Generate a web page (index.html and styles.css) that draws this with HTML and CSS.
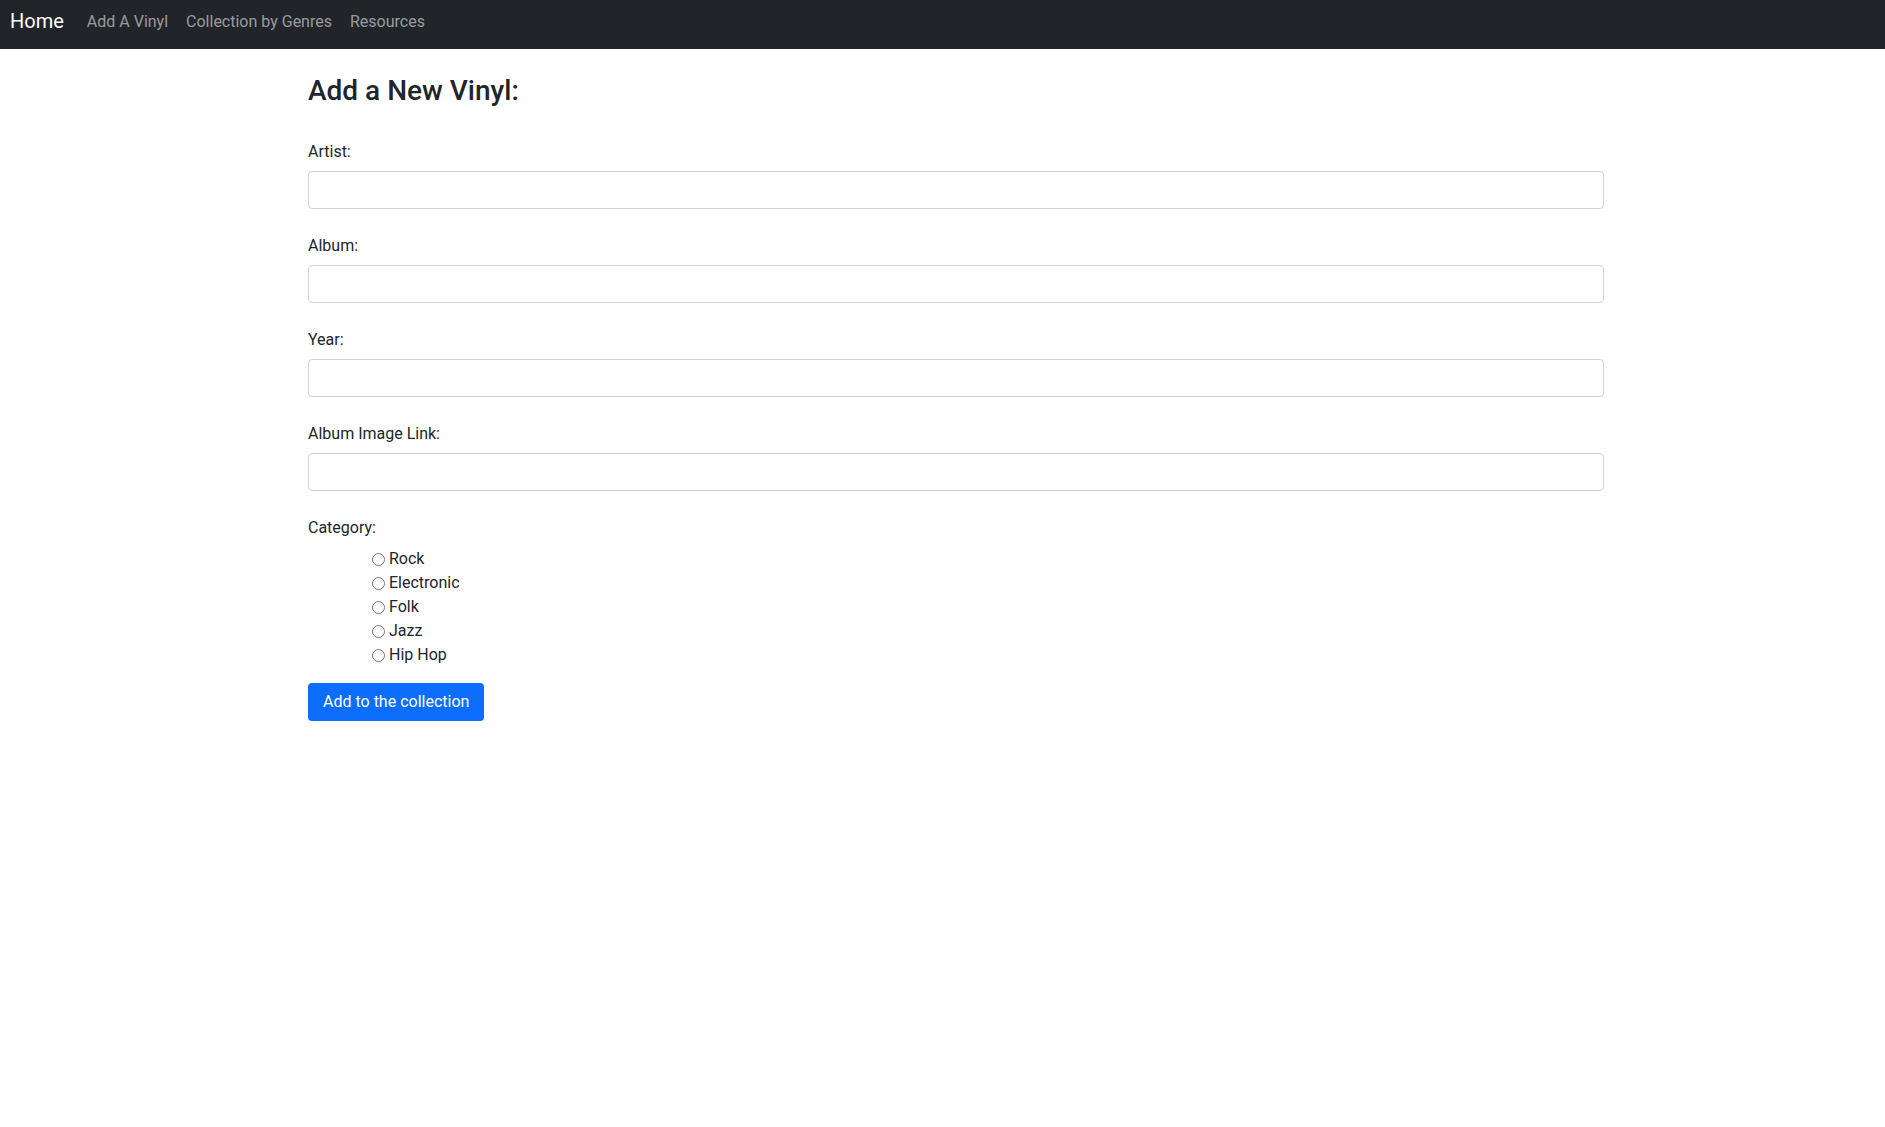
FILE: index.html
```html
<!DOCTYPE html>
<html lang="en">
<head>
<meta charset="utf-8">
<meta name="viewport" content="width=device-width, initial-scale=1">
<title>Add a Vinyl</title>
<link rel="stylesheet" href="styles.css">
</head>
<body>
<nav class="navbar">
  <a class="navbar-brand" href="#">Home</a>
  <ul class="navbar-nav">
    <li><a class="nav-link" href="#">Add A Vinyl</a></li>
    <li><a class="nav-link" href="#">Collection by Genres</a></li>
    <li><a class="nav-link" href="#">Resources</a></li>
  </ul>
</nav>
<main class="container">
  <h3 class="title">Add a New Vinyl:</h3>
  <form>
    <div class="field">
      <label class="form-label" for="artist">Artist:</label>
      <input class="form-control" type="text" id="artist" name="artist">
    </div>
    <div class="field">
      <label class="form-label" for="album">Album:</label>
      <input class="form-control" type="text" id="album" name="album">
    </div>
    <div class="field">
      <label class="form-label" for="year">Year:</label>
      <input class="form-control" type="text" id="year" name="year">
    </div>
    <div class="field">
      <label class="form-label" for="image">Album Image Link:</label>
      <input class="form-control" type="text" id="image" name="image">
    </div>
    <fieldset class="category">
      <legend class="form-label">Category:</legend>
      <div class="options">
        <label class="option"><input class="radio" type="radio" name="category" value="rock">Rock</label>
        <label class="option"><input class="radio" type="radio" name="category" value="electronic">Electronic</label>
        <label class="option"><input class="radio" type="radio" name="category" value="folk">Folk</label>
        <label class="option"><input class="radio" type="radio" name="category" value="jazz">Jazz</label>
        <label class="option"><input class="radio" type="radio" name="category" value="hiphop">Hip Hop</label>
      </div>
    </fieldset>
    <button class="btn" type="submit">Add to the collection</button>
  </form>
</main>
</body>
</html>
```
FILE: styles.css
```css
*, *::before, *::after {
  box-sizing: border-box;
}

body {
  margin: 0;
  background: #fff;
  color: #212529;
  font: 16px/24px Roboto, "Liberation Sans", sans-serif;
}

.navbar {
  display: flex;
  align-items: flex-start;
  padding: 0 10px 6px;
  background: #212529;
}

.navbar-brand {
  margin-right: 15px;
  padding: 6px 0;
  color: #fff;
  font-size: 20px;
  line-height: 30px;
  text-decoration: none;
}

.navbar-nav {
  display: flex;
  gap: 2px;
  margin: 0;
  padding: 0;
  list-style: none;
}

.nav-link {
  display: block;
  padding: 10px 8px 9px;
  color: rgba(255, 255, 255, 0.55);
  text-decoration: none;
}

.container {
  padding: 24px 14.9% 24px 308px;
}

.title {
  margin: 0 0 30px;
  font-size: 28px;
  font-weight: 500;
  line-height: 36px;
}

.field {
  margin-bottom: 24px;
}

.form-label {
  display: block;
  margin-bottom: 7px;
  padding: 1px 0 0;
}

.form-control {
  display: block;
  width: 100%;
  height: 38px;
  padding: 6px 12px;
  border: 1px solid #ced4da;
  border-radius: 4px;
  background: #fff;
  color: inherit;
  font: inherit;
}

.category {
  min-width: 0;
  margin: 0 0 16px;
  padding: 0;
  border: 0;
}

.options {
  padding-left: 64px;
}

.option {
  display: flex;
  align-items: center;
  gap: 4px;
  width: max-content;
}

.radio {
  width: 13px;
  height: 13px;
  margin: 0;
}

.btn {
  height: 38px;
  padding: 6px 15px;
  border: 0;
  border-radius: 4px;
  background: #0d6efd;
  color: #fff;
  font: inherit;
}
```
